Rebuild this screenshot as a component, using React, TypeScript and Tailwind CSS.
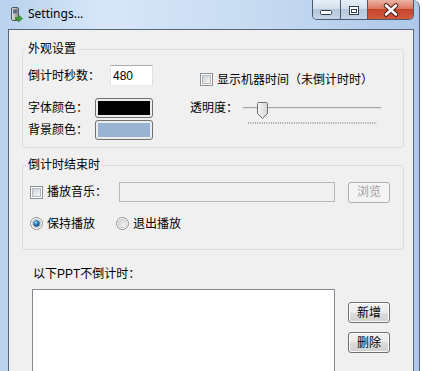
import React from "react";

function CheckBox() {
  return (
    <span className="flex h-[13px] w-[13px] shrink-0 items-center justify-center border border-[#8e8f8f] bg-white">
      <span className="h-[9px] w-[9px] border border-[#b4b8bd] bg-linear-to-br from-[#cdd1d6] to-[#f6f7f8]" />
    </span>
  );
}

function Radio({ checked }: { checked?: boolean }) {
  return (
    <svg width="13" height="13" viewBox="0 0 13 13" className="shrink-0">
      <defs>
        <linearGradient id="radio-off" x1="0" y1="0" x2="1" y2="1">
          <stop offset="0" stopColor="#cfd2d6" />
          <stop offset="1" stopColor="#f7f7f7" />
        </linearGradient>
        <radialGradient id="radio-on" cx="0.4" cy="0.35" r="0.7">
          <stop offset="0" stopColor="#9adcfb" />
          <stop offset="0.45" stopColor="#2f7fc0" />
          <stop offset="1" stopColor="#0f3b63" />
        </radialGradient>
      </defs>
      <circle cx="6.5" cy="6.5" r="6" fill="#fff" stroke="#8e8f8f" />
      <circle cx="6.5" cy="6.5" r="4.2" fill="url(#radio-off)" stroke="#b9bdc2" strokeWidth="0.8" />
      {checked && <circle cx="6.5" cy="6.5" r="3.2" fill="url(#radio-on)" />}
    </svg>
  );
}

function Button({ children, disabled }: { children: React.ReactNode; disabled?: boolean }) {
  return disabled ? (
    <span className="flex h-[21px] w-[42px] shrink-0 items-center justify-center rounded-[3px] border border-[#adb2b5] bg-[#f4f4f4] text-[#a0a0a0]">
      {children}
    </span>
  ) : (
    <span className="flex h-[21px] w-[42px] shrink-0 items-center justify-center rounded-[3px] border border-[#707070] bg-[linear-gradient(#f2f2f2,#ebebeb_50%,#dddddd_50%,#cfcfcf)] shadow-[inset_0_0_0_1px_#fbfbfb]">
      {children}
    </span>
  );
}

function Swatch({ color }: { color: string }) {
  return (
    <span className="flex h-[20px] w-[58px] rounded-[3px] border border-[#707070] bg-[#ececec] p-[2px]">
      <span className={`flex-1 ${color}`} />
    </span>
  );
}

function Slider() {
  return (
    <svg width="140" height="26" viewBox="0 0 140 26" className="ml-[5px]">
      <defs>
        <linearGradient id="thumb" x1="0" y1="0" x2="1" y2="0">
          <stop offset="0" stopColor="#f6f6f6" />
          <stop offset="1" stopColor="#d6d6d6" />
        </linearGradient>
      </defs>
      <rect x="0" y="7" width="138" height="1" fill="#a5a5a5" />
      <rect x="0" y="8" width="138" height="1" fill="#e2e2e2" />
      <path d="M14.5 3.5 q0 -1 1 -1 h8 q1 0 1 1 v10 l-5 5 l-5 -5 z" fill="url(#thumb)" stroke="#707070" />
      <line x1="5" y1="23" x2="134" y2="23" stroke="#a8a8a8" strokeWidth="2" strokeDasharray="1 1.3" />
    </svg>
  );
}

function TitleBar() {
  return (
    <div className="flex h-[29px] shrink-0 items-start">
      <svg width="13" height="16" viewBox="0 0 13 16" className="ml-[10px] mt-[7px]">
        <defs>
          <linearGradient id="dev" x1="0" y1="0" x2="1" y2="0">
            <stop offset="0" stopColor="#e8e8e8" />
            <stop offset="1" stopColor="#8c8c8c" />
          </linearGradient>
        </defs>
        <rect x="1.5" y="0.5" width="7" height="13" rx="1.5" fill="url(#dev)" stroke="#55595e" />
        <rect x="3" y="2.5" width="4" height="4" fill="#5d6f82" />
        <path d="M5.5 10.5 h3 v-2.5 l4 3.5 l-4 3.5 v-2.5 h-3 z" fill="#3ea63a" stroke="#23701f" strokeWidth="0.6" />
      </svg>
      <span className="ml-[5px] mt-[7px] font-['Noto_Sans',sans-serif] text-[12px] leading-[14px]">Settings...</span>
      <div className="ml-auto mr-[5px] flex h-[20px] overflow-hidden rounded-b-[5px] border border-t-0 border-[#4a5a6e]">
        <span className="flex w-[27px] bg-[linear-gradient(#e7eef7,#d3dfec_45%,#b6c7db_50%,#c6d6e8)]">
          <svg width="27" height="20" viewBox="0 0 27 20">
            <rect x="7.5" y="10.5" width="11" height="4" rx="1" fill="#fff" stroke="#2f3e52" />
          </svg>
        </span>
        <span className="w-px bg-[#4a5a6e]" />
        <span className="flex w-[26px] bg-[linear-gradient(#e7eef7,#d3dfec_45%,#b6c7db_50%,#c6d6e8)]">
          <svg width="26" height="20" viewBox="0 0 26 20">
            <rect x="8.5" y="6.5" width="9" height="8" fill="#fff" stroke="#2f3e52" />
            <rect x="10.5" y="9.5" width="5" height="3" fill="none" stroke="#2f3e52" />
          </svg>
        </span>
        <span className="w-px bg-[#4a5a6e]" />
        <span className="flex w-[45px] bg-[linear-gradient(#ebb4a4,#da7862_45%,#c5452b_50%,#d25a3f)]">
          <svg width="45" height="20" viewBox="0 0 45 20">
            <path d="M18 5.5 L28 14.5 M28 5.5 L18 14.5" stroke="#4a1a12" strokeWidth="4.5" strokeLinecap="round" />
            <path d="M18 5.5 L28 14.5 M28 5.5 L18 14.5" stroke="#fff" strokeWidth="2.6" strokeLinecap="round" />
          </svg>
        </span>
      </div>
    </div>
  );
}

export default function App() {
  return (
    <div className="h-[371px] w-[423px] overflow-hidden bg-white font-['Liberation_Sans','Noto_Sans_CJK_SC',sans-serif] text-[12px] leading-[14px] text-black">
      <div className="flex h-full w-[420px] flex-col rounded-tr-[7px] border-r border-[#52606f] bg-[linear-gradient(90deg,#b8d1ee,#d8e7f8_25%,#c8dbf2_60%,#aec8e9)]">
        <TitleBar />
        <div className="ml-[8px] mr-[5px] flex flex-1 flex-col overflow-hidden border border-b-0 border-[#56667a] bg-[#f0f0f0]">
          {/* 外观设置 */}
          <fieldset className="ml-[13px] mr-[9px] mt-[12px] h-[106px] shrink-0 rounded-[3px] border border-[#d5dfe5]">
            <legend className="ml-[3px] px-[2px]">外观设置</legend>
            <div className="flex pl-[5px] pt-[9px]">
              <div className="flex w-[162px] flex-col">
                <div className="flex h-[21px] items-center">
                  <span className="w-[82px]">倒计时秒数：</span>
                  <span className="flex h-[21px] w-[43px] items-center border border-[#abadb3] border-b-[#e3e9ef] border-l-[#e2e3ea] border-r-[#dbdfe6] bg-white pl-[2px]">
                    480
                  </span>
                </div>
                <div className="mt-[12px] flex h-[20px] items-center">
                  <span className="w-[67px]">字体颜色：</span>
                  <Swatch color="bg-black" />
                </div>
                <div className="mt-[2px] flex h-[20px] items-center">
                  <span className="w-[67px]">背景颜色：</span>
                  <Swatch color="bg-[#99b4d3]" />
                </div>
              </div>
              <div className="flex flex-col">
                <div className="mt-[8px] flex h-[13px] items-center gap-[4px] pl-[10px]">
                  <CheckBox />
                  <span>显示机器时间（未倒计时时）</span>
                </div>
                <div className="mt-[14px] flex">
                  <span className="mt-[1px]">透明度：</span>
                  <Slider />
                </div>
              </div>
            </div>
          </fieldset>

          {/* 倒计时结束时 */}
          <fieldset className="ml-[13px] mr-[9px] mt-[10px] h-[92px] shrink-0 rounded-[3px] border border-[#d5dfe5]">
            <legend className="ml-[3px] px-[2px]">倒计时结束时</legend>
            <div className="mt-[9px] flex h-[22px] items-center pl-[7px]">
              <CheckBox />
              <span className="ml-[4px] w-[60px]">播放音乐：</span>
              <span className="ml-[12px] h-[20px] w-[216px] border border-[#b5b8bb] bg-[#f0f0f0]" />
              <span className="ml-[13px]">
                <Button disabled>浏览</Button>
              </span>
            </div>
            <div className="mt-[14px] flex h-[13px] items-center pl-[7px]">
              <Radio checked />
              <span className="ml-[4px]">保持播放</span>
              <span className="ml-[21px]">
                <Radio />
              </span>
              <span className="ml-[4px]">退出播放</span>
            </div>
          </fieldset>

          <span className="ml-[24px] mt-[17px]">以下PPT不倒计时：</span>
          <div className="ml-[23px] mt-[8px] flex">
            <div className="h-[100px] w-[303px] border border-[#828790] bg-white" />
            <div className="ml-[13px] mt-[13px] flex flex-col gap-[9px]">
              <Button>新增</Button>
              <Button>删除</Button>
            </div>
          </div>
        </div>
      </div>
    </div>
  );
}
